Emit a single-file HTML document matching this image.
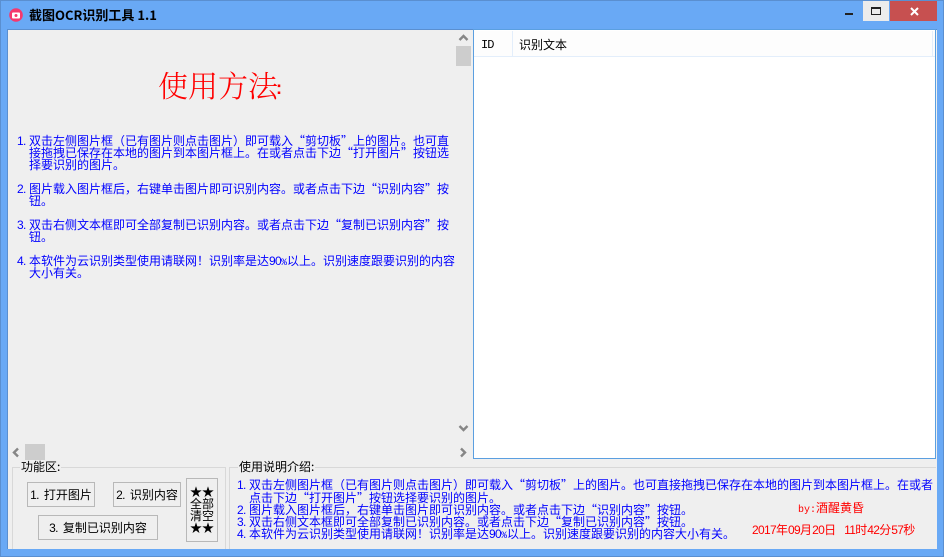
<!DOCTYPE html>
<html lang="zh"><head><meta charset="utf-8"><style>
html,body{margin:0;padding:0;width:944px;height:557px;overflow:hidden;background:#69a9f5}
*{box-sizing:border-box}
.a{position:absolute}
.t{position:absolute;white-space:nowrap;font:12px/12px "WenQuanYi Zen Hei","Noto Sans CJK SC",sans-serif;color:#000}
.b{color:#00f}
.m{font-family:"Liberation Sans",sans-serif;font-size:12px;letter-spacing:-.67px}
.p{font-family:"Liberation Mono",monospace;font-size:10px}
.btn{position:absolute;border:1px solid #b8b8b8;background:#efefef;text-align:center;font:12px/23px "WenQuanYi Zen Hei","Noto Sans CJK SC",sans-serif;color:#000;white-space:nowrap}
</style></head><body>
<div class="a" style="left:0;top:0;width:944px;height:557px;border:1px solid #5a8fd0;background:#69a9f5"></div>
<svg class="a" style="left:9px;top:8px" width="14" height="14" viewBox="0 0 14 14"><circle cx="7" cy="7" r="6.8" fill="#f5386e"/><rect x="3" y="4.5" width="8" height="6" rx="1" fill="#fff"/><circle cx="7" cy="7.5" r="1.5" fill="#f5386e"/></svg>
<div class="t" style="left:29px;top:8px;font-weight:bold;font-size:13px;line-height:14px">截图OCR识别工具 1.1</div>
<div class="a" style="left:845px;top:13px;width:8px;height:2px;background:#222"></div>
<div class="a" style="left:863px;top:1px;width:26px;height:20px;background:#ececec"></div>
<div class="a" style="left:871px;top:7px;width:10px;height:8px;border:1px solid #222;border-top-width:2px"></div>
<div class="a" style="left:890px;top:1px;width:47px;height:20px;background:#c75050"></div>
<svg class="a" style="left:910px;top:7px" width="9" height="9" viewBox="0 0 9 9"><path d="M1 1L8 8M8 1L1 8" stroke="#fff" stroke-width="2"/></svg>

<div class="a" style="left:7px;top:29px;width:930px;height:520px;background:#efefef;border-top:1px solid #5a8fd0;border-left:1px solid #5a8fd0"></div>

<div class="a" style="left:456px;top:46px;width:15px;height:20px;background:#cdcdcd"></div>
<div class="a" style="left:25px;top:444px;width:20px;height:16px;background:#cdcdcd"></div>
<svg class="a" style="left:458px;top:34px" width="11" height="7" viewBox="0 0 11 7"><path d="M1.5 6L5.5 2L9.5 6" fill="none" stroke="#868686" stroke-width="2.4"/></svg>
<svg class="a" style="left:458px;top:425px" width="11" height="7" viewBox="0 0 11 7"><path d="M1.5 1L5.5 5L9.5 1" fill="none" stroke="#868686" stroke-width="2.4"/></svg>
<svg class="a" style="left:12px;top:447px" width="7" height="11" viewBox="0 0 7 11"><path d="M6 1.5L2 5.5L6 9.5" fill="none" stroke="#868686" stroke-width="2.4"/></svg>
<svg class="a" style="left:460px;top:447px" width="7" height="11" viewBox="0 0 7 11"><path d="M1 1.5L5 5.5L1 9.5" fill="none" stroke="#868686" stroke-width="2.4"/></svg>

<div class="t" style="left:158px;top:66px;font-family:'Noto Serif CJK SC',serif;font-size:30px;line-height:36px;color:#f00;font-weight:300">使用方法<span style="font-family:'Liberation Sans',sans-serif;font-weight:bold;font-size:18px;position:relative;top:-3px;margin-left:-2px">:</span></div>

<div class="t b m" style="left:17px;top:135px">1.</div>
<div class="t b" style="left:29px;top:135px">双击左侧图片框（已有图片则点击图片）即可载入“剪切板”上的图片。也可直</div>
<div class="t b" style="left:29px;top:147px">接拖拽已保存在本地的图片到本图片框上。在或者点击下边“打开图片”按钮选</div>
<div class="t b" style="left:29px;top:159px">择要识别的图片。</div>
<div class="t b m" style="left:17px;top:183px">2.</div>
<div class="t b" style="left:29px;top:183px">图片载入图片框后，右键单击图片即可识别内容。或者点击下边“识别内容”按</div>
<div class="t b" style="left:29px;top:195px">钮。</div>
<div class="t b m" style="left:17px;top:219px">3.</div>
<div class="t b" style="left:29px;top:219px">双击右侧文本框即可全部复制已识别内容。或者点击下边“复制已识别内容”按</div>
<div class="t b" style="left:29px;top:231px">钮。</div>
<div class="t b m" style="left:17px;top:255px">4.</div>
<div class="t b" style="left:29px;top:255px">本软件为云识别类型使用请联网！识别率是达<span class="m">90</span><span class="p">%</span>以上。识别速度跟要识别的内容</div>
<div class="t b" style="left:29px;top:267px">大小有关。</div>

<div class="a" style="left:473px;top:29px;width:463px;height:430px;background:#fff;border:1px solid #5b9fe0"></div>
<div class="a" style="left:474px;top:31px;width:461px;height:26px;background:#fdfdfd;border-bottom:1px solid #e3eefb"></div>
<div class="a" style="left:512px;top:31px;width:1px;height:25px;background:#e3eefb"></div>
<div class="a" style="left:932px;top:31px;width:1px;height:25px;background:#e3eefb"></div>
<div class="t" style="left:481px;top:39px;font-family:'Liberation Mono',monospace;font-size:12px;letter-spacing:-1px">ID</div>
<div class="t" style="left:519px;top:39px">识别文本</div>

<div class="a" style="left:12px;top:467px;width:214px;height:82px;border:1px solid #d8d8d8;border-bottom:0"></div>
<div class="t" style="left:20px;top:461px;background:#efefef;padding:0 1px">功能区:</div>
<div class="btn" style="left:27px;top:482px;width:68px;height:25px"><span class="m" style="margin-right:5px">1.</span>打开图片</div>
<div class="btn" style="left:113px;top:482px;width:68px;height:25px"><span class="m" style="margin-right:5px">2.</span>识别内容</div>
<div class="btn" style="left:38px;top:515px;width:120px;height:25px"><span class="m" style="margin-right:5px">3.</span>复制已识别内容</div>
<div class="btn" style="left:186px;top:478px;width:32px;height:64px"></div>
<div class="t" style="left:189px;top:486px;line-height:12px;white-space:normal;width:26px;text-align:center;font-size:12px">★★<br>全部<br>清空<br>★★</div>

<div class="a" style="left:229px;top:467px;width:707px;height:82px;border:1px solid #d8d8d8;border-bottom:0;border-right:0"></div>
<div class="t" style="left:238px;top:461px;background:#efefef;padding:0 1px">使用说明介绍:</div>
<div class="t b m" style="left:237px;top:479px">1.</div>
<div class="t b" style="left:249px;top:479px">双击左侧图片框（已有图片则点击图片）即可载入“剪切板”上的图片。也可直接拖拽已保存在本地的图片到本图片框上。在或者</div>
<div class="t b" style="left:249px;top:492px">点击下边“打开图片”按钮选择要识别的图片。</div>
<div class="t b m" style="left:237px;top:504px">2.</div>
<div class="t b" style="left:249px;top:504px">图片载入图片框后，右键单击图片即可识别内容。或者点击下边“识别内容”按钮。</div>
<div class="t b m" style="left:237px;top:516px">3.</div>
<div class="t b" style="left:249px;top:516px">双击右侧文本框即可全部复制已识别内容。或者点击下边“复制已识别内容”按钮。</div>
<div class="t b m" style="left:237px;top:528px">4.</div>
<div class="t b" style="left:249px;top:528px">本软件为云识别类型使用请联网！识别率是达<span class="m">90</span><span class="p">%</span>以上。识别速度跟要识别的内容大小有关。</div>
<div class="t" style="left:798px;top:502px;color:#f00"><span class="p">by:</span>酒醒黄昏</div>
<div class="t" style="left:752px;top:524px;color:#f00"><span class="m">2017</span>年<span class="m">09</span>月<span class="m">20</span>日<span class="m" style="margin-left:8px">11</span>时<span class="m">42</span>分<span class="m">57</span>秒</div>
</body></html>
